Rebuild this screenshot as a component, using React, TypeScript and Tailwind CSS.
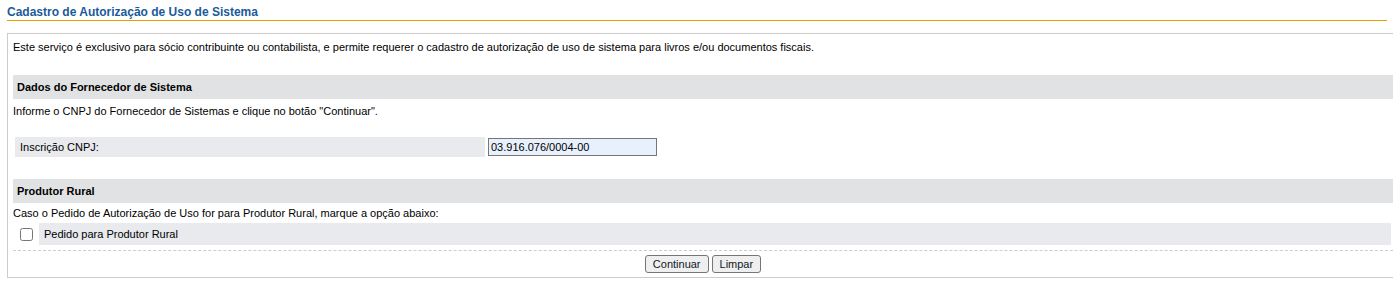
export default function App() {
  return (
    <div className="w-[1393px] h-[288px] overflow-hidden bg-white font-['Liberation_Sans',Arial,sans-serif] text-[11px] text-black">
      {/* Título da página */}
      <div className="ml-[7px] w-[1380px] h-[21px] pt-[5px] border-b border-[#e6a100]">
        <h1 className="text-[12px] leading-[14px] font-bold text-[#1b5a9a]">
          Cadastro de Autorização de Uso de Sistema
        </h1>
      </div>

      <div className="ml-[7px] mt-[12px] w-[1392px] border border-[#cccccc] px-[5px] pt-[6px] pb-[4px]">
        <p className="leading-[14px]">
          Este serviço é exclusivo para sócio contribuinte ou contabilista, e permite requerer o
          cadastro de autorização de uso de sistema para livros e/ou documentos fiscais.
        </p>

        {/* Dados do Fornecedor */}
        <div className="mt-[21px] h-[24px] leading-[24px] bg-[#e1e2e4] pl-[4px] font-bold">
          Dados do Fornecedor de Sistema
        </div>
        <p className="pt-[5px] leading-[14px]">
          Informe o CNPJ do Fornecedor de Sistemas e clique no botão "Continuar".
        </p>

        <div className="mt-[19px] flex items-center gap-[3px] pl-[2px]">
          <div className="w-[470px] h-[20px] leading-[20px] bg-[#e8eaed] pl-[5px]">
            Inscrição CNPJ:
          </div>
          <input
            readOnly
            value="03.916.076/0004-00"
            className="w-[169px] h-[18px] border border-[#767676] bg-[#e8f0fe] px-[2px] text-[11px] leading-[16px] text-black outline-none"
          />
        </div>

        {/* Produtor Rural */}
        <div className="mt-[22px] h-[24px] leading-[24px] bg-[#e1e2e4] pl-[4px] font-bold">
          Produtor Rural
        </div>
        <p className="pt-[3px] leading-[14px]">
          Caso o Pedido de Autorização de Uso for para Produtor Rural, marque a opção abaixo:
        </p>
        <div className="mt-[3px] flex items-center pr-[2px]">
          <div className="w-[26px] flex justify-end pr-[6px]">
            <input type="checkbox" className="m-0 w-[13px] h-[13px]" />
          </div>
          <div className="flex-1 h-[22px] leading-[22px] bg-[#e8eaed] pl-[5px]">
            Pedido para Produtor Rural
          </div>
        </div>

        <div className="mt-[5px] border-t border-dashed border-[#cccccc] pt-[4px] flex justify-center gap-[3px]">
          <button className="h-[18px] px-[7px] leading-[16px] border border-[#767676] rounded-[3px] bg-[#efefef] text-[11px] text-[#101828]">
            Continuar
          </button>
          <button className="h-[18px] px-[7px] leading-[16px] border border-[#767676] rounded-[3px] bg-[#efefef] text-[11px] text-[#101828]">
            Limpar
          </button>
        </div>
      </div>
    </div>
  );
}
